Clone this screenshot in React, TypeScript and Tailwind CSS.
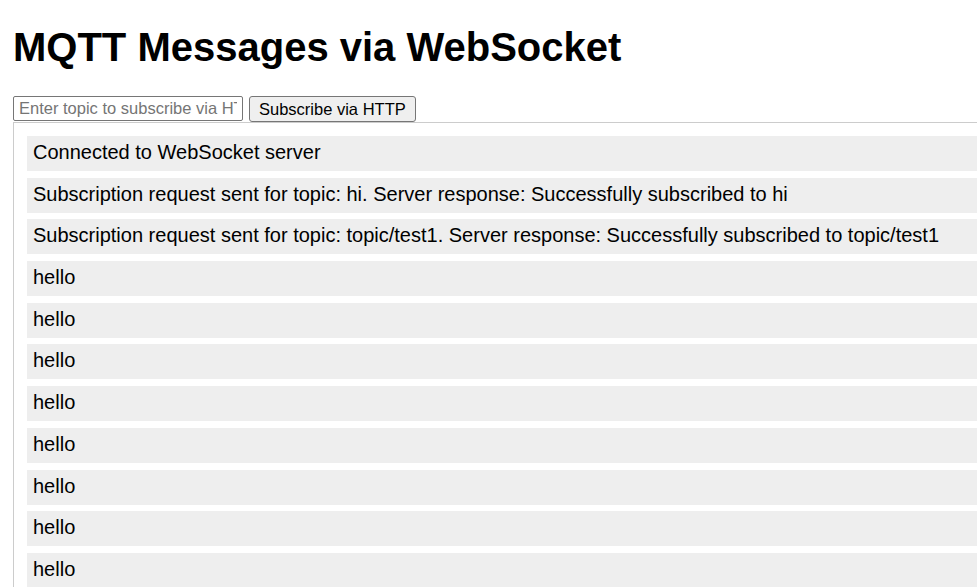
const messages = [
  "Connected to WebSocket server",
  "Subscription request sent for topic: hi. Server response: Successfully subscribed to hi",
  "Subscription request sent for topic: topic/test1. Server response: Successfully subscribed to topic/test1",
  "hello",
  "hello",
  "hello",
  "hello",
  "hello",
  "hello",
  "hello",
  "hello",
  "hello",
];

export default function App() {
  return (
    <div className="w-[977px] h-[587px] overflow-hidden bg-white text-black font-['Liberation_Sans',Arial,sans-serif]">
      <div className="pl-[13px]">
        <h1 className="text-[40px] font-bold leading-[46px] pt-[24px] mb-[26px] whitespace-nowrap">
          MQTT Messages via WebSocket
        </h1>

        <div className="flex items-start gap-[6px] h-[26px]">
          <input
            type="text"
            placeholder="Enter topic to subscribe via HTTP"
            className="w-[230px] h-[25px] border border-[#767676] rounded-[2px] px-[5px] text-[16.5px] text-black placeholder:text-[#757575] outline-none"
          />
          <button className="h-[26px] px-[9px] border border-[#767676] rounded-[3px] bg-[#efefef] text-[16.5px] leading-[20px] text-black whitespace-nowrap">
            Subscribe via HTTP
          </button>
        </div>

        <div className="w-[1000px] border-t border-l border-[#cccccc] p-[13px] flex flex-col gap-[6.7px]">
          {messages.map((msg, i) => (
            <div key={i} className="bg-[#eeeeee] px-[6px] pt-[5px] pb-[7px] text-[20px] leading-[23px] whitespace-nowrap">
              {msg}
            </div>
          ))}
        </div>
      </div>
    </div>
  );
}
